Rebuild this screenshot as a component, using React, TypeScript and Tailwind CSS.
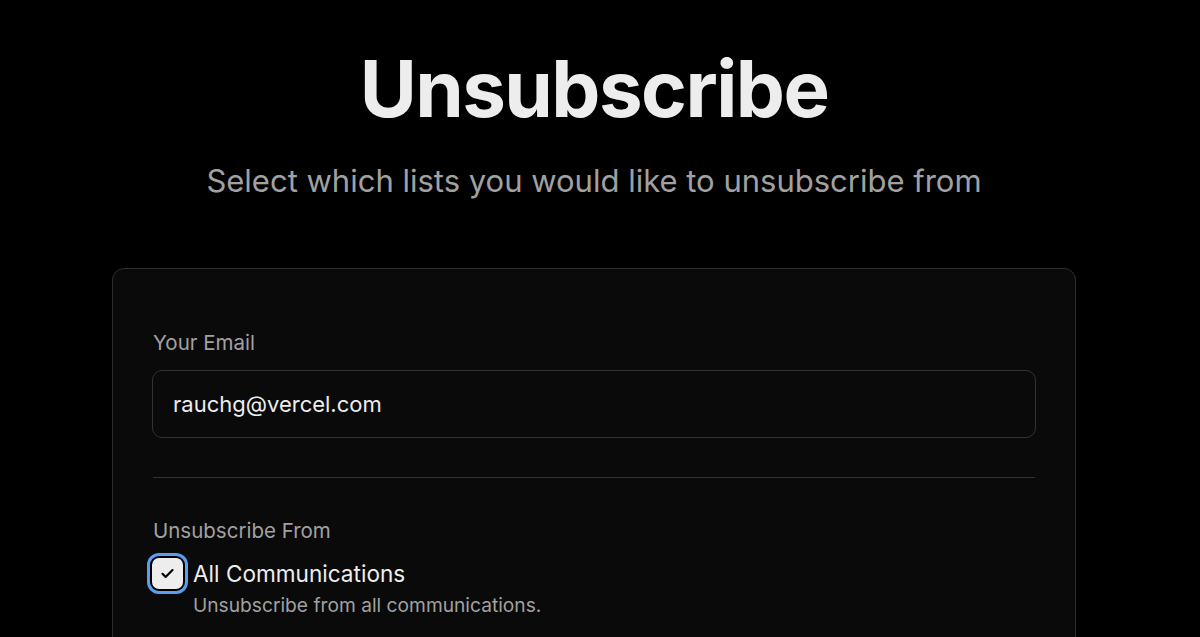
import React, { useState } from 'react';

const font = { fontFamily: 'Inter, "Noto Sans", sans-serif' };

export default function App() {
  const [email, setEmail] = useState('rauchg@vercel.com');
  const [all, setAll] = useState(true);

  return (
    <div className="min-h-screen w-full bg-black text-white" style={font}>
      <div className="w-[1188px] flex flex-col items-center pt-[50px]">
        <h1 className="text-[78px] leading-none font-bold tracking-[-0.02em] text-[#ededed]">
          Unsubscribe
        </h1>
        <p className="mt-[37px] text-[31px] leading-none text-[#a1a1a1]">
          Select which lists you would like to unsubscribe from
        </p>

        <div className="mt-[72px] w-[964px] rounded-[12px] border border-[#2e2e2e] bg-[#0a0a0a] px-[40px] pt-[64px] pb-10">
          <label className="block text-[20.5px] leading-none text-[#a1a1a1]">Your Email</label>
          <input
            value={email}
            onChange={(e) => setEmail(e.target.value)}
            className="mt-[16px] ml-[-1px] h-[68px] w-[calc(100%+2px)] rounded-[10px] border border-[#333] bg-[#0a0a0a] px-[20px] text-[22px] text-[#ededed] outline-none"
          />

          <div className="mt-[39px] h-px w-full bg-[#333]" />

          <div className="mt-[43px] text-[20.5px] leading-none text-[#a1a1a1]">Unsubscribe From</div>

          <div className="mt-[16px] flex items-start gap-[10px]">
            <button
              onClick={() => setAll(!all)}
              className="mt-[1px] ml-[-1px] flex h-[31px] w-[31px] shrink-0 items-center justify-center rounded-[7px] bg-[#ededed] ring-[3px] ring-[#5b9ef0] ring-offset-2 ring-offset-black"
            >
              {all && (
                <svg width="15" height="15" viewBox="0 0 24 24" fill="none" stroke="#000" strokeWidth="3.5" strokeLinecap="round" strokeLinejoin="round">
                  <path d="M4 12.5l5 5L20 6.5" />
                </svg>
              )}
            </button>
            <div className="flex flex-col">
              <span className="text-[22.6px] leading-[34px] text-[#ededed]">All Communications</span>
              <span className="mt-[5px] text-[19.2px] leading-none text-[#a1a1a1]">Unsubscribe from all communications.</span>
            </div>
          </div>
        </div>
      </div>
    </div>
  );
}
